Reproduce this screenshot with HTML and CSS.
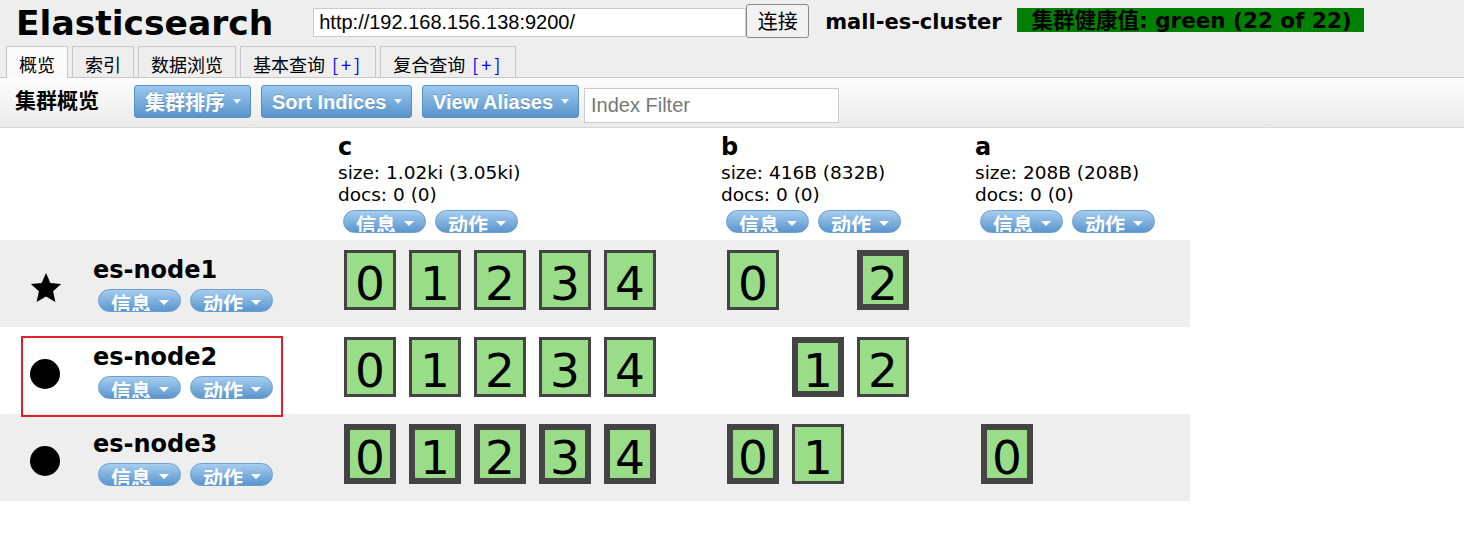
FILE: index.html
```html
<!DOCTYPE html>
<html lang="zh-CN">
<head>
<meta charset="utf-8">
<title>Elasticsearch Head</title>
<link rel="stylesheet" href="styles.css">
</head>
<body>
<div class="header">
  <div class="topbar">
    <h1 class="title">Elasticsearch</h1>
    <input class="url" type="text" value="http://192.168.156.138:9200/">
    <button class="connect">连接</button>
    <span class="cluster-name">mall-es-cluster</span>
    <span class="health">集群健康值: green (22 of 22)</span>
  </div>
  <div class="tabs">
    <div class="tab active">概览</div>
    <div class="tab">索引</div>
    <div class="tab">数据浏览</div>
    <div class="tab">基本查询<span class="plus"> [+]</span></div>
    <div class="tab">复合查询<span class="plus"> [+]</span></div>
  </div>
</div>
<div class="toolbar">
  <div class="toolbar-title">集群概览</div>
  <div class="tbtn w1"><span class="tbtn-cjk">集群排序</span><span class="caret"></span></div>
  <div class="tbtn w2"><span class="tbtn-text">Sort Indices</span><span class="caret"></span></div>
  <div class="tbtn w3"><span class="tbtn-text">View Aliases</span><span class="caret"></span></div>
  <input class="filter" type="text" placeholder="Index Filter">
</div>
<div class="overview">
  <div class="row head">
    <div></div>
    <div></div>
    <div class="idx">
      <div class="idx-name">c</div>
      <div class="idx-stat">size: 1.02ki (3.05ki)</div>
      <div class="idx-stat">docs: 0 (0)</div>
      <div class="pills pills-head"><span class="pill"><span class="pill-text">信息</span><span class="pill-caret"></span></span><span class="pill"><span class="pill-text">动作</span><span class="pill-caret"></span></span></div>
    </div>
    <div class="idx">
      <div class="idx-name">b</div>
      <div class="idx-stat">size: 416B (832B)</div>
      <div class="idx-stat">docs: 0 (0)</div>
      <div class="pills pills-head"><span class="pill"><span class="pill-text">信息</span><span class="pill-caret"></span></span><span class="pill"><span class="pill-text">动作</span><span class="pill-caret"></span></span></div>
    </div>
    <div class="idx">
      <div class="idx-name">a</div>
      <div class="idx-stat">size: 208B (208B)</div>
      <div class="idx-stat">docs: 0 (0)</div>
      <div class="pills pills-head"><span class="pill"><span class="pill-text">信息</span><span class="pill-caret"></span></span><span class="pill"><span class="pill-text">动作</span><span class="pill-caret"></span></span></div>
    </div>
  </div>

  <div class="row node alt">
    <div class="node-icon">
      <svg class="star" width="32" height="31" viewBox="0 0 32 31"><polygon points="16,1 20.4,11.0 31.2,12.06 23.1,19.3 25.4,29.9 16,24.5 6.6,29.9 8.9,19.3 0.8,12.06 11.6,11.0" fill="#000"/></svg>
    </div>
    <div class="node-info">
      <div class="node-name">es-node1</div>
      <div class="pills pills-node"><span class="pill"><span class="pill-text">信息</span><span class="pill-caret"></span></span><span class="pill"><span class="pill-text">动作</span><span class="pill-caret"></span></span></div>
    </div>
    <div class="shards">
      <div class="shard">0</div><div class="shard">1</div><div class="shard">2</div><div class="shard">3</div><div class="shard">4</div>
    </div>
    <div class="shards">
      <div class="shard">0</div><div class="shard empty"></div><div class="shard primary">2</div>
    </div>
    <div class="shards"></div>
  </div>

  <div class="row node marked">
    <div class="node-icon"><span class="dot"></span></div>
    <div class="node-info">
      <div class="node-name">es-node2</div>
      <div class="pills pills-node"><span class="pill"><span class="pill-text">信息</span><span class="pill-caret"></span></span><span class="pill"><span class="pill-text">动作</span><span class="pill-caret"></span></span></div>
    </div>
    <div class="shards">
      <div class="shard">0</div><div class="shard">1</div><div class="shard">2</div><div class="shard">3</div><div class="shard">4</div>
    </div>
    <div class="shards">
      <div class="shard empty"></div><div class="shard primary">1</div><div class="shard">2</div>
    </div>
    <div class="shards"></div>
    <div class="annot"></div>
  </div>

  <div class="row node alt">
    <div class="node-icon"><span class="dot"></span></div>
    <div class="node-info">
      <div class="node-name">es-node3</div>
      <div class="pills pills-node"><span class="pill"><span class="pill-text">信息</span><span class="pill-caret"></span></span><span class="pill"><span class="pill-text">动作</span><span class="pill-caret"></span></span></div>
    </div>
    <div class="shards">
      <div class="shard primary">0</div><div class="shard primary">1</div><div class="shard primary">2</div><div class="shard primary">3</div><div class="shard primary">4</div>
    </div>
    <div class="shards">
      <div class="shard primary">0</div><div class="shard">1</div>
    </div>
    <div class="shards">
      <div class="shard primary">0</div>
    </div>
  </div>
</div>
</body>
</html>
```
FILE: styles.css
```css
body {
  margin: 0;
  font-family: "DejaVu Sans", "Noto Sans CJK SC", sans-serif;
  color: #000;
  background: #fff;
}

/* header */
.header {
  background: #eee;
}
.topbar {
  display: flex;
  align-items: flex-start;
  height: 44px;
}
.title {
  margin: 3px 0 0 16px;
  font-size: 34.5px;
  line-height: 40px;
  font-weight: bold;
}
.url {
  margin: 8px 0 0 40px;
  width: 433px;
  height: 29px;
  box-sizing: border-box;
  border: 1px solid #ccc;
  padding: 0 5px;
  font: 20px "Liberation Sans", sans-serif;
  color: #000;
  background: #fff;
  outline: none;
}
.connect {
  margin-top: 4px;
  width: 63px;
  height: 34px;
  box-sizing: border-box;
  border: 1px solid #8a8a8a;
  border-radius: 3px;
  background: #f2f2f2;
  padding: 0;
  font: 20px/30px "Noto Sans CJK SC", sans-serif;
  color: #000;
}
.cluster-name {
  margin: 10px 0 0 16px;
  font-size: 21px;
  line-height: 24px;
  font-weight: bold;
  white-space: nowrap;
}
.health {
  margin: 8px 0 0 15px;
  width: 347px;
  height: 24px;
  box-sizing: border-box;
  padding: 2px 0 0 15px;
  background: #008000;
  font-size: 21.5px;
  line-height: 22px;
  font-weight: bold;
  white-space: nowrap;
  overflow: hidden;
}

/* tabs */
.tabs {
  display: flex;
  align-items: flex-start;
  gap: 4px;
  height: 31px;
  margin-top: 2px;
  padding-left: 6px;
}
.tab {
  height: 31px;
  box-sizing: border-box;
  border: 1px solid #c8c8c8;
  border-bottom: none;
  padding: 5px 12px 0;
  font: 18px/24px "Noto Sans CJK SC", sans-serif;
  white-space: nowrap;
}
.tab.active {
  height: 32px;
  margin-bottom: -1px;
  background: #fafafa;
  position: relative;
  z-index: 1;
}
.plus {
  color: #0000ee;
  letter-spacing: 3px;
}

/* toolbar */
.toolbar {
  display: flex;
  align-items: flex-start;
  height: 49px;
  border-top: 1px solid #c8c8c8;
  border-bottom: 1px solid #d9d9d9;
  background: linear-gradient(#fdfdfd, #ebebeb);
  padding-left: 15px;
}
.toolbar-title {
  margin-top: 7px;
  width: 84px;
  font-size: 21px;
  line-height: 33px;
  font-weight: bold;
  white-space: nowrap;
}
.tbtn {
  margin: 7px 0 0 10px;
  height: 33px;
  box-sizing: border-box;
  display: flex;
  align-items: center;
  padding: 0 9px 0 10px;
  border: 1px solid #5a8fc5;
  border-radius: 3px;
  background: linear-gradient(#9ac8ee, #5893cb);
  color: #fff;
  font-weight: bold;
  text-shadow: 0 -1px 0 rgba(0, 0, 0, 0.2);
  white-space: nowrap;
}
.tbtn.w1 { width: 117px; margin-left: 35px; }
.tbtn.w2 { width: 151px; }
.tbtn.w3 { width: 157px; }
.tbtn-cjk {
  font: bold 20px/31px "Noto Sans CJK SC", sans-serif;
}
.tbtn-text {
  font: bold 20px/29px "Liberation Sans", sans-serif;
  padding-top: 2px;
}
.caret {
  margin-left: auto;
  width: 0;
  height: 0;
  border-left: 4px solid transparent;
  border-right: 4px solid transparent;
  border-top: 5px solid rgba(255, 255, 255, 0.85);
}
.filter {
  margin: 10px 0 0 5px;
  width: 255px;
  height: 35px;
  box-sizing: border-box;
  border: 1px solid #ccc;
  padding: 0 0 0 6px;
  font: 20px "Liberation Sans", sans-serif;
  background: #fff;
  outline: none;
}
.filter::placeholder {
  color: #777;
}

/* overview table */
.row {
  display: grid;
  grid-template-columns: 91px 245px 383px 254px 217px;
  width: 1190px;
}
.row.head {
  height: 112px;
}
.row.node {
  height: 87px;
}
.row.alt {
  background: #eee;
}
.row.marked {
  position: relative;
}

.idx {
  padding: 3px 0 0 2px;
}
.idx-name {
  font-size: 24px;
  line-height: 32px;
  font-weight: bold;
}
.idx-stat {
  font-size: 18.5px;
  line-height: 22px;
  white-space: nowrap;
}
.idx-name + .idx-stat {
  margin-top: -1px;
}

.pills {
  display: flex;
  gap: 9px;
  margin-left: 5px;
}
.pills-head { margin-top: 4px; }
.pills-node { margin-top: 3px; }
.pill {
  width: 83px;
  height: 23px;
  box-sizing: border-box;
  display: flex;
  align-items: flex-start;
  padding-left: 12px;
  border: 1px solid #6d9dcc;
  border-radius: 12px;
  background: linear-gradient(#a6cdef, #5a96ce);
  color: #fff;
  overflow: hidden;
}
.pill-text {
  margin-top: 4px;
  font: bold 20px/20px "Noto Sans CJK SC", sans-serif;
  white-space: nowrap;
}
.pill-caret {
  margin: 10px 0 0 8px;
  width: 0;
  height: 0;
  border-left: 5px solid transparent;
  border-right: 5px solid transparent;
  border-top: 5px solid #fff;
}

.node-icon {
  padding: 32px 0 0 30px;
}
.star {
  display: block;
}
.dot {
  display: block;
  width: 30px;
  height: 30px;
  border-radius: 50%;
  background: #000;
}
.node-info {
  padding: 14px 0 0 2px;
}
.node-name {
  font-size: 24px;
  line-height: 32px;
  font-weight: bold;
}

.shards {
  display: flex;
  align-items: flex-start;
  gap: 13px;
  padding: 10px 0 0 8px;
}
.shard {
  width: 52px;
  height: 60px;
  box-sizing: border-box;
  border: 3px solid #444;
  background: #99dd88;
  text-align: center;
  font-size: 47px;
  line-height: 61px;
}
.shard.primary {
  border-width: 6px;
  line-height: 55px;
}
.shard.empty {
  visibility: hidden;
}

.annot {
  position: absolute;
  left: 21px;
  top: 9px;
  width: 262px;
  height: 81px;
  box-sizing: border-box;
  border: 2px solid #e3202a;
}
```
